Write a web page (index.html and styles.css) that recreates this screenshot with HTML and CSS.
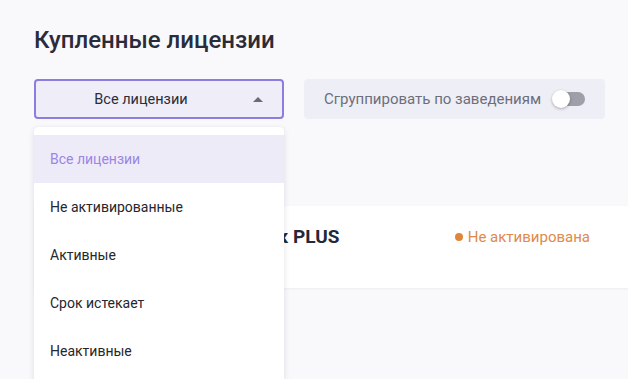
FILE: index.html
```html
<!DOCTYPE html>
<html lang="ru">
<head>
<meta charset="utf-8">
<link rel="stylesheet" href="styles.css">
</head>
<body>
<div class="page">
  <h1 class="title">Купленные лицензии</h1>
  <div class="filters">
    <div class="select-wrap">
      <div class="select">
        <span class="select-value">Все лицензии</span>
        <span class="caret"></span>
      </div>
      <ul class="menu">
        <li class="menu-item active">Все лицензии</li>
        <li class="menu-item">Не активированные</li>
        <li class="menu-item">Активные</li>
        <li class="menu-item">Срок истекает</li>
        <li class="menu-item">Неактивные</li>
      </ul>
    </div>
    <div class="group-toggle">
      <span class="group-label">Сгруппировать по заведениям</span>
      <span class="switch"><span class="knob"></span></span>
    </div>
  </div>
  <div class="card">
    <div class="card-name">Quick Resto Кассовый блок PLUS</div>
    <div class="status"><span class="dot"></span>Не активирована</div>
  </div>
</div>
</body>
</html>
```
FILE: styles.css
```css
* { box-sizing: border-box; }
html, body { margin: 0; padding: 0; }
body {
  background: #f9f9fc;
  font-family: Roboto, "Noto Sans", sans-serif;
  width: 628px;
  height: 379px;
  overflow: hidden;
}
.page {
  padding: 24px 0 0 34px;
}
.title {
  margin: 0;
  font-size: 24px;
  font-weight: 500;
  color: #2a2c3a;
  line-height: 32px;
}
.filters {
  display: flex;
  gap: 20px;
  margin-top: 23px;
  align-items: flex-start;
}
.select-wrap {
  position: relative;
  width: 250px;
}
.select {
  height: 40px;
  border: 2px solid #8d7de0;
  border-radius: 4px;
  background: #efeef8;
  display: flex;
  align-items: center;
  justify-content: center;
  position: relative;
  font-size: 14.5px;
  color: #2a2c3a;
}
.select-value { margin-left: -36px; }
.caret {
  position: absolute;
  right: 19px;
  top: 16px;
  width: 0;
  height: 0;
  border-left: 5px solid transparent;
  border-right: 5px solid transparent;
  border-bottom: 5px solid #6a6b74;
}
.menu {
  position: absolute;
  top: 48px;
  left: 0;
  width: 250px;
  margin: 0;
  padding: 8px 0;
  list-style: none;
  background: #fff;
  border-radius: 4px;
  box-shadow: 0 2px 6px rgba(40, 40, 70, 0.12), 0 0 1px rgba(40,40,70,0.1);
  z-index: 5;
}
.menu-item {
  height: 48px;
  padding: 0 16px;
  display: flex;
  align-items: center;
  font-size: 14px;
  color: #25262e;
}
.menu-item.active {
  background: #eeebf9;
  color: #9a86e4;
}
.group-toggle {
  width: 301px;
  height: 40px;
  background: #eeeef6;
  border-radius: 4px;
  display: flex;
  align-items: center;
  padding: 0 0 0 20px;
  gap: 14px;
}
.group-label {
  font-size: 15px;
  color: #6c6e7b;
  white-space: nowrap;
}
.switch {
  position: relative;
  width: 30px;
  height: 14px;
  border-radius: 7px;
  background: #9e9fa8;
  display: inline-block;
  flex: none;
}
.knob {
  position: absolute;
  left: -3px;
  top: -2px;
  width: 18px;
  height: 18px;
  border-radius: 50%;
  background: #fff;
  box-shadow: 0 1px 3px rgba(0,0,0,0.3);
}
.card {
  margin-top: 87px;
  height: 82px;
  background: #fff;
  display: flex;
  align-items: flex-start;
  justify-content: space-between;
  padding: 20px 38px 0 0;
  box-shadow: 0 1px 2px rgba(40,40,70,0.06);
}
.card-name {
  font-size: 19px;
  font-weight: 700;
  color: #25283a;
  line-height: 22px;
  white-space: nowrap;
  padding-left: 9px;
}
.status {
  display: flex;
  align-items: center;
  gap: 5px;
  font-size: 15px;
  color: #e0894c;
  line-height: 22px;
}
.dot {
  width: 8px;
  height: 8px;
  border-radius: 50%;
  background: #e0863a;
}
```
